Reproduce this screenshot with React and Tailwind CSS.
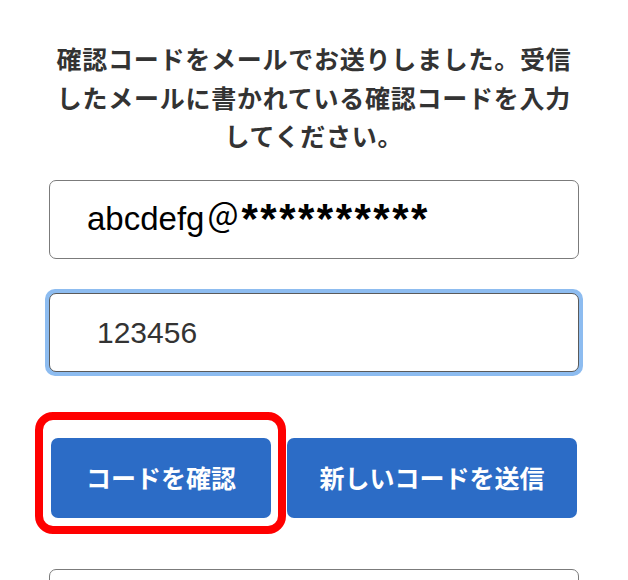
export default function App() {
  const jp = { fontFamily: '"Noto Sans CJK JP", "Noto Sans", sans-serif' };
  return (
    <div className="h-[580px] w-[628px] overflow-hidden bg-white" style={jp}>
      <div className="px-[49px] pt-[39px]">
        <p className="text-center text-[25px] font-bold leading-[38.5px] tracking-[0.75px] text-[#333]">
          確認コードをメールでお送りしました。受信したメールに書かれている確認コードを入力してください。
        </p>

        <div
          className="mt-[25px] flex h-[79px] items-center rounded-[7px] border-[1.5px] border-[#7b7b7b] pl-[37px] text-[33px] text-black"
          style={{ fontFamily: '"Liberation Sans", "Noto Sans CJK JP", sans-serif' }}
        >
          <span>abcdefg</span>
          <span className="ml-[2px] text-[33px]">＠</span>
          <span className="ml-[2px] text-[42px] font-bold leading-none tracking-[2.5px]">**********</span>
        </div>

        <div className="-mx-[4px] mt-[30px] rounded-[10px] bg-[#8dbcf0] p-[4px]">
          <div
            className="flex h-[79px] items-center rounded-[7px] border-[1.5px] border-[#5a5a5a] bg-white pl-[47px] text-[30px] text-[#333]"
            style={{ fontFamily: '"Liberation Sans", sans-serif' }}
          >
            123456
          </div>
        </div>

        <div className="mx-[2px] mt-[62px] flex gap-[16px]">
          <div className="relative">
            <button
              type="button"
              className="flex h-[80px] w-[220px] items-center justify-center rounded-[7px] bg-[#2c6cc6] text-[25px] font-bold text-white"
            >
              コードを確認
            </button>
            <div className="pointer-events-none absolute -left-[16px] -top-[26px] h-[122px] w-[251px] rounded-[18px] border-[8px] border-[#ff0000]" />
          </div>
          <button
            type="button"
            className="flex h-[80px] flex-1 items-center justify-center rounded-[7px] bg-[#2c6cc6] text-[25px] font-bold text-white"
          >
            新しいコードを送信
          </button>
        </div>

        <div className="mt-[51px] h-[60px] rounded-[7px] border-[1.5px] border-[#7b7b7b]" />
      </div>
    </div>
  );
}
